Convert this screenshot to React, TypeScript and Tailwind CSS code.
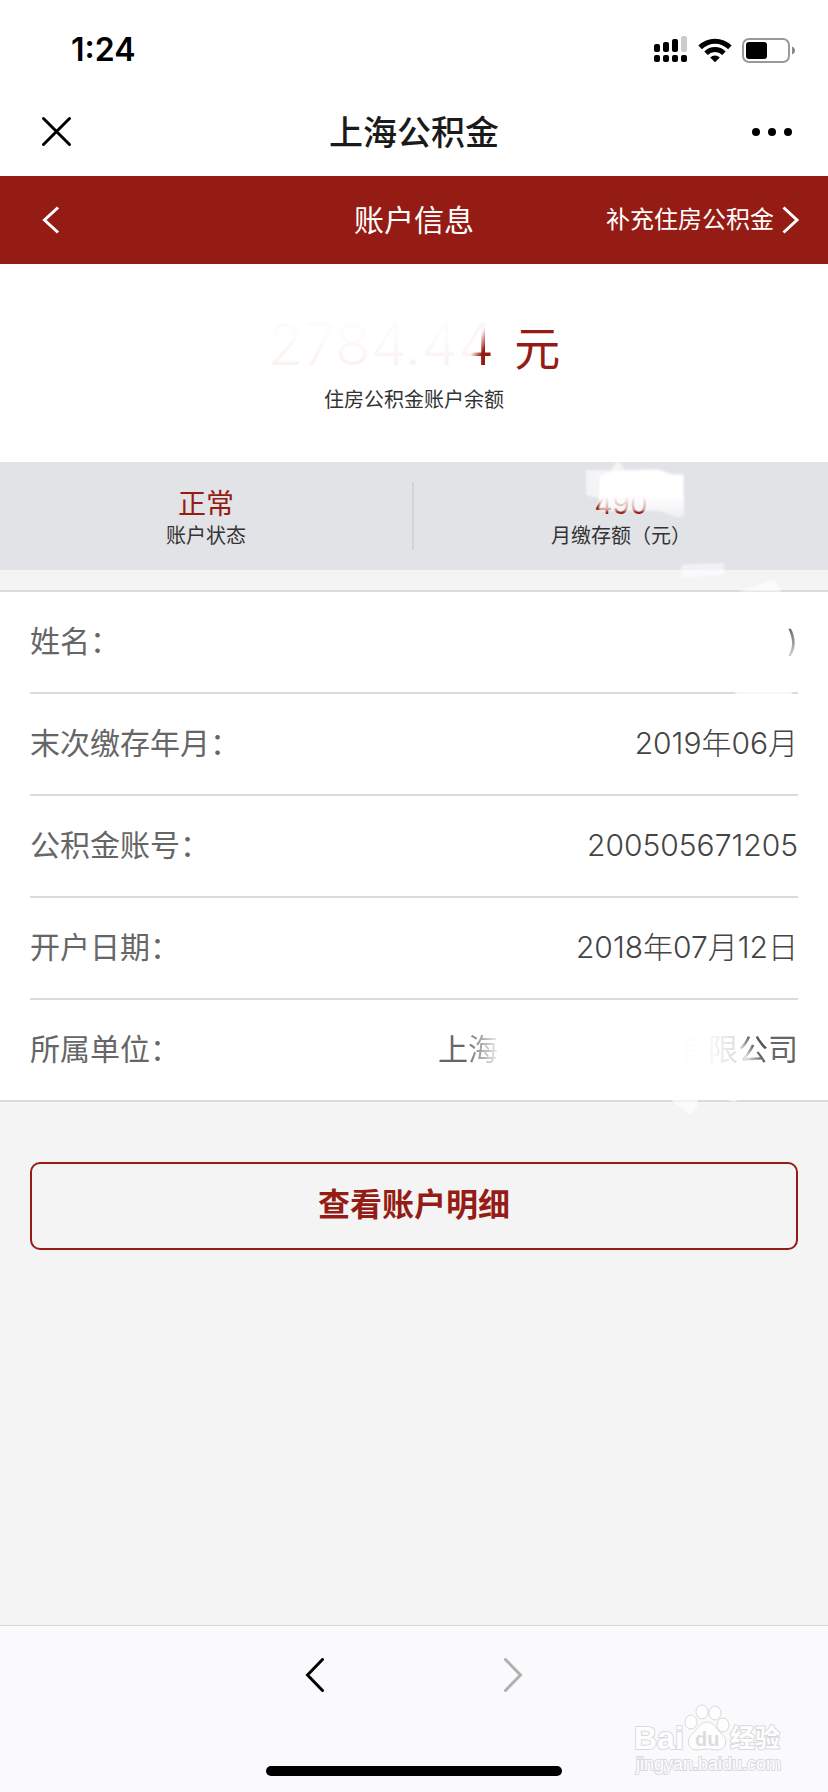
import React from 'react';
import { clsx } from 'clsx';

type RowData = { label: string; value: React.ReactNode };

const SignalIcon = () => (
  <svg width="34" height="28" viewBox="0 0 34 28" aria-hidden="true">
    <rect x="0" y="8" width="6" height="8" rx="2" />
    <rect x="9" y="6" width="6" height="10" rx="2" />
    <rect x="18" y="3" width="6" height="13" rx="2" />
    <rect x="27" y="0" width="6" height="16" rx="2" fill="#cccccc" />
    {[0, 9, 18, 27].map((x) => <rect key={x} x={x} y="19" width="6" height="7" rx="2" />)}
  </svg>
);

const WifiIcon = () => (
  <svg width="34" height="28" viewBox="0 0 34 28" aria-hidden="true">
    <path d="M.4 9.6a23.6 23.6 0 0 1 33.2 0l-3.5 3.6a18.6 18.6 0 0 0-26.2 0Z" />
    <path d="M6.3 15.5a15.2 15.2 0 0 1 21.4 0l-3.5 3.6a10.2 10.2 0 0 0-14.4 0Z" />
    <path d="M12.2 21.5a6.8 6.8 0 0 1 9.6 0L17 26.2Z" />
  </svg>
);

const BatteryIcon = () => (
  <svg width="54" height="28" viewBox="0 0 54 28" aria-hidden="true">
    <rect x="1" y="3" width="46" height="23" rx="6" fill="none" stroke="#999" strokeWidth="2" />
    <rect x="4" y="6" width="21" height="17" rx="3" />
    <path d="M50 10.500c4 1.500 4 6.500 0 8Z" fill="#888" />
  </svg>
);

// Thin chevron of the browser toolbar
const ToolbarChevron = ({ direction }: { direction: 'left' | 'right' }) => (
  <svg width="20" height="34" viewBox="0 0 20 34" fill="none" stroke="currentColor" aria-hidden="true">
    <path d={direction === 'left' ? 'M17.500 1.500 2.500 17l15 15.500' : 'M2.500 1.500 17.500 17l-15 15.500'} strokeWidth="3" strokeLinecap="round" />
  </svg>
);

// Shorter, squarer chevron of the red title bar
const TitleChevron = ({ direction }: { direction: 'left' | 'right' }) => (
  <svg width="18" height="28" viewBox="0 0 18 28" fill="none" stroke="currentColor" aria-hidden="true">
    <path d={direction === 'left' ? 'M16 1.500 2.500 14 16 26.500' : 'M1.500 1.500 15 14 1.500 26.500'} strokeWidth="3" />
  </svg>
);

const Watermark = () => (
  <svg width="156" height="76" viewBox="0 0 156 76" className="absolute right-[40px] bottom-3" fill="#fefefe" stroke="#d9d9dc" strokeWidth="1" fontFamily="Liberation Sans, Noto Sans CJK SC, sans-serif" aria-hidden="true">
    <g strokeWidth="2" paintOrder="stroke">
      <text x="2" y="45" fontSize="32" fontWeight="700">Bai</text>
      <text x="98" y="43" fontSize="25" fontWeight="700">经验</text>
      <text x="4" y="66" fontSize="18">jingyan.baidu.com</text>
    </g>
    <ellipse cx="59" cy="18" rx="6" ry="7" />
    <ellipse cx="70" cy="8" rx="6" ry="7" />
    <ellipse cx="83" cy="9" rx="6" ry="7" />
    <ellipse cx="91" cy="21" rx="6" ry="7" />
    <path d="M75 18c7 0 9 7 14 11 8 7 5 17-4 17-4 0-6-1-10-1s-6 1-10 1c-9 0-12-10-4-17 5-4 7-11 14-11Z" />
    <text x="63" y="42" fontSize="20" fontWeight="700" fill="#dcdcde" stroke="none">du</text>
  </svg>
);

const AmountSmear = () => (
  <svg width="220" height="240" viewBox="0 0 220 240" fill="#fff" className="pointer-events-none absolute top-0 right-[28px] z-10" aria-hidden="true">
    <defs>
      <filter id="soft" x="-10%" y="-10%" width="120%" height="120%">
        <feGaussianBlur stdDeviation="1" />
      </filter>
      <linearGradient id="fade" x1="0" y1="0" x2="0" y2="1">
        <stop offset="0" stopColor="#fff" />
        <stop offset="1" stopColor="#fff" stopOpacity=".4" />
      </linearGradient>
    </defs>
    <g filter="url(#soft)">
      <path d="M6 8h25l5-8h4l5 8 33-1 14 5h12v24H18l-12-3Z" opacity=".6" />
      <path d="M20 14 34 9l44-1 14 5h11v22H19Z" />
      <path d="M19 34h85v20l-6 2-18-7H19Z" fill="url(#fade)" />
      <path d="M101 106c0-3 3-4 8-4l35-1v12l-43 3Z" opacity=".55" />
      <path d="m157 130 38-13 6 13Z" opacity=".6" />
      <path d="M154 229h58v4h-56Z" opacity=".85" />
    </g>
  </svg>
);

const InfoRow = ({ label, value, last }: RowData & { last: boolean }) => (
  <div className={clsx('flex items-center justify-between pb-0.5', last ? 'h-[100px]' : 'h-[102px] border-b-2 border-[#dbdbdb]')}>
    <dt>{label}</dt>
    <dd>{value}</dd>
  </div>
);

const rows: RowData[] = [
  { label: '姓名：', value: <span className="bg-linear-to-b from-[#555] to-[#ddd] bg-clip-text text-transparent">)</span> },
  { label: '末次缴存年月：', value: <span className="font-light text-[#444]">2019年06月</span> },
  { label: '公积金账号：', value: <span className="font-light text-[#444]">200505671205</span> },
  { label: '开户日期：', value: <span className="font-light text-[#444]">2018年07月12日</span> },
  {
    label: '所属单位：',
    value: (
      <span className="flex">
        <span>上</span>
        <span className="mr-[180px] bg-linear-to-r from-[#777] to-[#eee] bg-clip-text text-transparent">海</span>
        <span className="bg-linear-to-r from-[#fdfdfd] from-40% to-[#ddd] bg-clip-text text-transparent">有限</span>
        <span className="bg-linear-to-tr from-[#ddd] from-30% to-[#555] to-60% bg-clip-text text-transparent">公</span>
        <span>司</span>
      </span>
    ),
  },
];

const App: React.FC = () => {
  return (
    <div className="flex min-h-screen flex-col bg-[#f4f4f4] font-['Inter','Noto_Sans_CJK_SC',sans-serif] text-[#333]">
      <div className="flex h-[88px] items-center justify-between bg-white pt-3 pr-8 pl-[71px] text-black">
        <span className="text-[32px] leading-8 font-semibold">1:24</span>
        <div className="flex items-center gap-2.5">
          <SignalIcon />
          <WifiIcon />
          <BatteryIcon />
        </div>
      </div>

      <header className="grid h-[88px] grid-cols-[1fr_auto_1fr] items-center bg-white px-9 text-[#1a1a1a]">
        <button type="button" aria-label="关闭" className="w-10 text-black">
          <svg width="40" height="40" viewBox="0 0 40 40" stroke="currentColor" strokeWidth="3" strokeLinecap="round">
            <path d="M7.500 6.500 33.500 32.500M33.500 6.500 7.500 32.500" />
          </svg>
        </button>
        <h1 className="text-[34px] font-medium">上海公积金</h1>
        <button type="button" aria-label="更多" className="flex gap-2 justify-self-end text-black">
          <span className="size-2 rounded-full bg-black" />
          <span className="size-2 rounded-full bg-black" />
          <span className="size-2 rounded-full bg-black" />
        </button>
      </header>

      <nav className="grid h-[88px] grid-cols-[1fr_auto_1fr] items-center bg-[#951c14] px-7 text-white">
        <button type="button" aria-label="返回" className="w-8 pl-3.5">
          <TitleChevron direction="left" />
        </button>
        <h2 className="text-[30px]">账户信息</h2>
        <a href="#supplement" className="flex items-center gap-2 justify-self-end text-2xl">
          补充住房公积金
          <TitleChevron direction="right" />
        </a>
      </nav>

      <section className="flex h-[198px] flex-col items-center bg-white pt-11">
        <p className="flex items-baseline gap-5 text-[#951c14]">
          <span className="text-[58px] leading-[72px] font-light">
            <span className="bg-linear-to-b from-[#fefbfb] from-40% to-[#faeceb] bg-clip-text text-transparent">2784.4</span>
            <span className="bg-linear-to-br from-[#fdf6f6] from-50% to-[#951c14] to-65% bg-clip-text text-transparent">4</span>
          </span>
          <span className="text-[46px] leading-[72px]">元</span>
        </p>
        <p className="text-xl leading-8">住房公积金账户余额</p>
      </section>

      <section className="relative grid h-[108px] grid-cols-2 bg-[#e2e3e7] py-5 text-center">
        <div className="flex flex-col items-center border-r-2 border-[#d3d3d3] pt-0.5">
          <strong className="text-[28px] leading-10 font-normal text-[#951c14]">正常</strong>
          <span className="text-xl leading-6">账户状态</span>
        </div>
        <div className="flex flex-col items-center pt-0.5">
          <strong className="text-[28px] leading-10 font-normal text-[#951c14]">490</strong>
          <span className="text-xl leading-6">月缴存额（元）</span>
        </div>
        <AmountSmear />
      </section>

      <dl className="relative mt-5 border-t-2 border-b-2 border-[#dbdbdb] bg-white px-[30px] text-[30px] text-[#666]">
        {rows.map((row, index) => (
          <InfoRow key={row.label} {...row} last={index === rows.length - 1} />
        ))}
        <svg width="80" height="24" viewBox="0 0 80 24" fill="#fff" className="absolute right-[84px] -bottom-[20px]" aria-hidden="true">
          <path d="M6 3h28l-1 8-5 7-5-1Z" opacity=".65" />
          <path d="M60 3h16l-6 3Z" opacity=".6" />
        </svg>
      </dl>

      <div className="px-[30px] pt-[60px]">
        <button type="button" className="h-[88px] w-full rounded-[10px] border-2 border-[#951c14] pb-0.5 text-[32px] font-bold text-[#951c14]">
          查看账户明细
        </button>
      </div>

      <footer className="relative mt-auto flex h-[167px] flex-col items-center justify-between border-t border-[#d8d8d8] bg-[#fafafc] pt-8 pb-4">
        <div className="flex gap-[178px]">
          <button type="button" aria-label="后退" className="text-black">
            <ToolbarChevron direction="left" />
          </button>
          <button type="button" aria-label="前进" className="text-[#b0b0b0]" disabled>
            <ToolbarChevron direction="right" />
          </button>
        </div>
        <div className="h-2.5 w-[296px] rounded-full bg-black" />
        <Watermark />
      </footer>
    </div>
  );
};

export default App;
